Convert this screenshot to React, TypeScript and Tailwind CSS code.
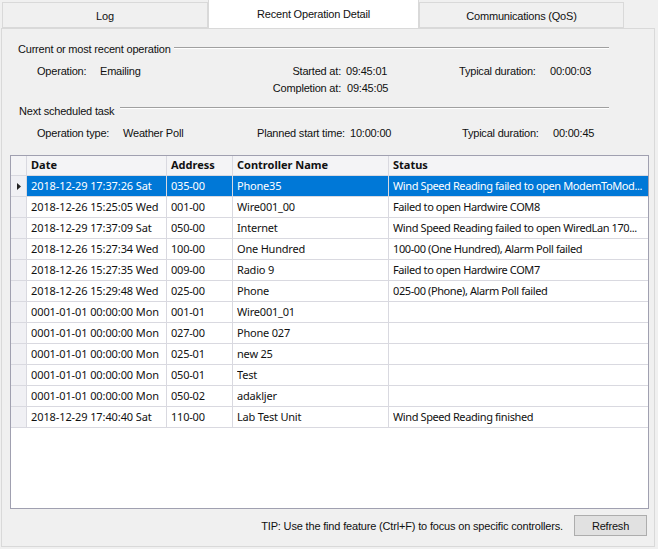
const rows = [
  ["2018-12-29 17:37:26 Sat", "035-00", "Phone35", "Wind Speed Reading failed to open ModemToMod..."],
  ["2018-12-26 15:25:05 Wed", "001-00", "Wire001_00", "Failed to open Hardwire COM8"],
  ["2018-12-29 17:37:09 Sat", "050-00", "Internet", "Wind Speed Reading failed to open WiredLan 170..."],
  ["2018-12-26 15:27:34 Wed", "100-00", "One Hundred", "100-00 (One Hundred), Alarm Poll failed"],
  ["2018-12-26 15:27:35 Wed", "009-00", "Radio 9", "Failed to open Hardwire COM7"],
  ["2018-12-26 15:29:48 Wed", "025-00", "Phone", "025-00 (Phone), Alarm Poll failed"],
  ["0001-01-01 00:00:00 Mon", "001-01", "Wire001_01", ""],
  ["0001-01-01 00:00:00 Mon", "027-00", "Phone 027", ""],
  ["0001-01-01 00:00:00 Mon", "025-01", "new 25", ""],
  ["0001-01-01 00:00:00 Mon", "050-01", "Test", ""],
  ["0001-01-01 00:00:00 Mon", "050-02", "adakljer", ""],
  ["2018-12-29 17:40:40 Sat", "110-00", "Lab Test Unit", "Wind Speed Reading finished"],
];

const label = "font-['Liberation_Sans',sans-serif] text-[11px] tracking-[-0.2px] leading-[14px] text-[#111] whitespace-nowrap";
const cell = "h-full flex items-center border-r border-b border-[#d9d9e0] pl-[4px] pr-[4px] overflow-hidden whitespace-nowrap";
const tracking = ["tracking-[-0.1px]", "tracking-[-0.2px]", "tracking-[-0.2px]", "tracking-[-0.4px]"];

function Tab({ children, active, width }: { children: string; active?: boolean; width: string }) {
  return active ? (
    <div className={`${width} h-[28px] bg-white border-x border-[#d9d9d9] flex items-center justify-center ${label}`}>{children}</div>
  ) : (
    <div className={`${width} h-[26px] mt-[2px] pt-[1px] bg-[#f0f0f0] border border-[#d9d9d9] flex items-center justify-center ${label}`}>{children}</div>
  );
}

function Section({ title, width, lineTop }: { title: string; width: string; lineTop: string }) {
  return (
    <div className="flex items-start h-[14px]">
      <span className={`${width} ${label}`}>{title}</span>
      <div className={`flex-1 h-[2px] bg-[#a0a0a0] border-b border-white ${lineTop}`} />
    </div>
  );
}

export default function App() {
  return (
    <div className="w-[658px] h-[549px] bg-[#f0f0f0] overflow-hidden pl-[2px]">
      <div className="flex h-[28px]">
        <Tab width="w-[206px]">Log</Tab>
        <Tab width="w-[211px]" active>Recent Operation Detail</Tab>
        <Tab width="w-[205px]">Communications (QoS)</Tab>
      </div>
      <div className="w-[654px] h-[519px] -ml-[1px] bg-[#f0f0f0] border border-[#d9d9d9] flex flex-col pt-[13px] pl-[8px]">
        <div className="pl-[8px] pr-[45px]">
          <Section title="Current or most recent operation" width="w-[156px]" lineTop="mt-[5px]" />
          <div className={`grid grid-cols-[63px_190px_51px_118px_91px_auto] mt-[8px] pl-[19px] h-[14px] ${label}`}>
            <span>Operation:</span>
            <span>Emailing</span>
            <span className="text-right">Started at:</span>
            <span className="pl-[5px]">09:45:01</span>
            <span>Typical duration:</span>
            <span>00:00:03</span>
          </div>
          <div className={`grid grid-cols-[253px_51px_auto] mt-[3px] pl-[19px] h-[14px] ${label}`}>
            <span />
            <span className="flex justify-end">Completion at:</span>
            <span className="pl-[6px]">09:45:05</span>
          </div>
          <div className="mt-[9px]">
            <Section title="Next scheduled task" width="w-[102px] pl-[1px]" lineTop="mt-[3px]" />
          </div>
          <div className={`grid grid-cols-[86px_134px_93px_112px_91px_auto] mt-[8px] pl-[19px] h-[14px] ${label}`}>
            <span>Operation type:</span>
            <span>Weather Poll</span>
            <span>Planned start time:</span>
            <span>10:00:00</span>
            <span>Typical duration:</span>
            <span>00:00:45</span>
          </div>
        </div>

        <div className="mt-[15px] w-[639px] h-[354px] bg-white border border-[#a0a0b0] font-['Noto_Sans',sans-serif] text-[11px] text-[#111] shrink-0">
          <div className="grid grid-cols-[16px_140px_66px_156px_259px] h-[20px] font-bold bg-[#f4f4f6]">
            <div className={cell} />
            <div className={cell}>Date</div>
            <div className={cell}>Address</div>
            <div className={cell}>Controller Name</div>
            <div className={`${cell} border-r-0`}>Status</div>
          </div>
          {rows.map((r, i) => {
            const sel = i === 0;
            return (
              <div key={i} className="grid grid-cols-[16px_140px_66px_156px_259px] h-[21px]">
                <div className={`${cell} bg-[#f0f0f4] !pl-[6px]`}>
                  {sel && (
                    <svg width="4" height="7" viewBox="0 0 4 7"><path d="M0 0l4 3.5L0 7z" fill="#222" /></svg>
                  )}
                </div>
                {r.map((t, j) => (
                  <div key={j} className={`${cell} ${j === 3 ? "border-r-0" : ""} ${sel ? "bg-[#0078d7] text-white" : ""}`}>
                    <span className={`block w-full overflow-hidden ${tracking[j]}`}>{t}</span>
                  </div>
                ))}
              </div>
            );
          })}
        </div>

        <div className="flex items-center justify-end mt-[6px] w-[637px]">
          <span className={`${label} !tracking-[-0.17px] mr-[11px]`}>TIP: Use the find feature (Ctrl+F) to focus on specific controllers.</span>
          <button className={`w-[73px] h-[21px] bg-[#e1e1e1] border border-[#adadad] ${label}`}>Refresh</button>
        </div>
      </div>
    </div>
  );
}
